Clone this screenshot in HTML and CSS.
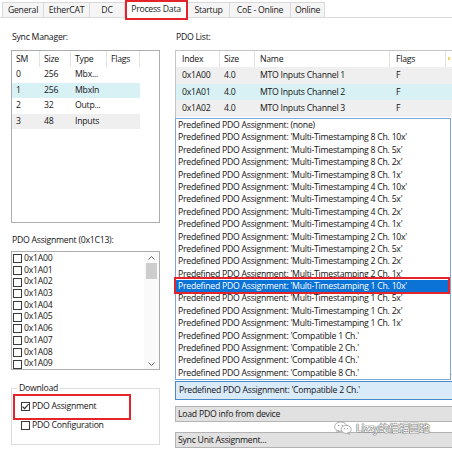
FILE: index.html
```html
<!DOCTYPE html>
<html>
<head>
<meta charset="utf-8">
<link rel="stylesheet" href="styles.css">
</head>
<body>
<div class="window">
  <div class="tabs">
    <div class="tab t-general">General</div>
    <div class="tab t-ethercat">EtherCAT</div>
    <div class="tab t-dc">DC</div>
    <div class="tab t-pd active">Process Data</div>
    <div class="tab t-startup">Startup</div>
    <div class="tab t-coe">CoE - Online</div>
    <div class="tab t-online">Online</div>
  </div>

  <div class="content">
    <div class="left">
      <div class="label">Sync Manager:</div>
      <div class="box sm-box">
        <div class="lv-head">
          <div class="hc sm-c1">SM</div>
          <div class="hc sm-c2">Size</div>
          <div class="hc sm-c3">Type</div>
          <div class="hc sm-c4">Flags</div>
        </div>
        <div class="sm-row"><div class="sm-c1">0</div><div class="sm-c2">256</div><div class="sm-c3">Mbx...</div><div class="sm-c4"></div></div>
        <div class="sm-row hl-cyan"><div class="sm-c1">1</div><div class="sm-c2">256</div><div class="sm-c3">MbxIn</div><div class="sm-c4"></div></div>
        <div class="sm-row"><div class="sm-c1">2</div><div class="sm-c2">32</div><div class="sm-c3">Outp...</div><div class="sm-c4"></div></div>
        <div class="sm-row hl-gray"><div class="sm-c1">3</div><div class="sm-c2">48</div><div class="sm-c3">Inputs</div><div class="sm-c4"></div></div>
      </div>

      <div class="label label-pa">PDO Assignment (0x1C13):</div>
      <div class="box pa-box">
        <div class="pa-list">
          <div class="pa-item"><span class="chk"></span>0x1A00</div>
          <div class="pa-item"><span class="chk"></span>0x1A01</div>
          <div class="pa-item"><span class="chk"></span>0x1A02</div>
          <div class="pa-item"><span class="chk"></span>0x1A03</div>
          <div class="pa-item"><span class="chk"></span>0x1A04</div>
          <div class="pa-item"><span class="chk"></span>0x1A05</div>
          <div class="pa-item"><span class="chk"></span>0x1A06</div>
          <div class="pa-item"><span class="chk"></span>0x1A07</div>
          <div class="pa-item"><span class="chk"></span>0x1A08</div>
          <div class="pa-item"><span class="chk"></span>0x1A09</div>
        </div>
        <div class="vscroll">
          <svg class="arrow" width="9" height="6" viewBox="0 0 9 6"><path d="M1.5 4.5 L4.5 1.5 L7.5 4.5" fill="none" stroke="#606060" stroke-width="1"/></svg>
          <div class="track"><div class="thumb"></div></div>
          <svg class="arrow" width="9" height="6" viewBox="0 0 9 6"><path d="M1.5 1.5 L4.5 4.5 L7.5 1.5" fill="none" stroke="#606060" stroke-width="1"/></svg>
        </div>
      </div>

      <div class="group">
        <div class="legend">Download</div>
        <div class="grp-item marked"><span class="chk checked"><svg width="9" height="9" viewBox="0 0 9 9"><path d="M1.6 4.6 L3.6 6.6 L7.6 2" fill="none" stroke="#222" stroke-width="1.1"/></svg></span>PDO Assignment</div>
        <div class="grp-item"><span class="chk"></span>PDO Configuration</div>
      </div>
    </div>

    <div class="right">
      <div class="label">PDO List:</div>
      <div class="box pdo-box">
        <div class="lv-head">
          <div class="hc p-c1">Index</div>
          <div class="hc p-c2">Size</div>
          <div class="hc p-c3">Name</div>
          <div class="hc p-c4">Flags</div>
          <div class="hc p-c5"><span class="mark"></span></div>
        </div>
        <div class="p-row hl-gray"><div class="p-c1">0x1A00</div><div class="p-c2">4.0</div><div class="p-c3">MTO Inputs Channel 1</div><div class="p-c4">F</div></div>
        <div class="p-row hl-cyan"><div class="p-c1">0x1A01</div><div class="p-c2">4.0</div><div class="p-c3">MTO Inputs Channel 2</div><div class="p-c4">F</div></div>
        <div class="p-row hl-gray"><div class="p-c1">0x1A02</div><div class="p-c2">4.0</div><div class="p-c3">MTO Inputs Channel 3</div><div class="p-c4">F</div></div>
        <div class="p-row"></div>
      </div>
      <div class="combo">Predefined PDO Assignment: 'Compatible 2 Ch.'</div>
      <div class="btn">Load PDO info from device</div>
      <div class="btn btn2">Sync Unit Assignment...</div>
    </div>
  </div>

  <div class="dropdown">
    <div class="dd-item">Predefined PDO Assignment: (none)</div>
    <div class="dd-item">Predefined PDO Assignment: 'Multi-Timestamping 8 Ch. 10x'</div>
    <div class="dd-item">Predefined PDO Assignment: 'Multi-Timestamping 8 Ch. 5x'</div>
    <div class="dd-item">Predefined PDO Assignment: 'Multi-Timestamping 8 Ch. 2x'</div>
    <div class="dd-item">Predefined PDO Assignment: 'Multi-Timestamping 8 Ch. 1x'</div>
    <div class="dd-item">Predefined PDO Assignment: 'Multi-Timestamping 4 Ch. 10x'</div>
    <div class="dd-item">Predefined PDO Assignment: 'Multi-Timestamping 4 Ch. 5x'</div>
    <div class="dd-item">Predefined PDO Assignment: 'Multi-Timestamping 4 Ch. 2x'</div>
    <div class="dd-item">Predefined PDO Assignment: 'Multi-Timestamping 4 Ch. 1x'</div>
    <div class="dd-item">Predefined PDO Assignment: 'Multi-Timestamping 2 Ch. 10x'</div>
    <div class="dd-item">Predefined PDO Assignment: 'Multi-Timestamping 2 Ch. 5x'</div>
    <div class="dd-item">Predefined PDO Assignment: 'Multi-Timestamping 2 Ch. 2x'</div>
    <div class="dd-item">Predefined PDO Assignment: 'Multi-Timestamping 2 Ch. 1x'</div>
    <div class="dd-item selected">Predefined PDO Assignment: 'Multi-Timestamping 1 Ch. 10x'</div>
    <div class="dd-item">Predefined PDO Assignment: 'Multi-Timestamping 1 Ch. 5x'</div>
    <div class="dd-item">Predefined PDO Assignment: 'Multi-Timestamping 1 Ch. 2x'</div>
    <div class="dd-item">Predefined PDO Assignment: 'Multi-Timestamping 1 Ch. 1x'</div>
    <div class="dd-item">Predefined PDO Assignment: 'Compatible 1 Ch.'</div>
    <div class="dd-item">Predefined PDO Assignment: 'Compatible 2 Ch.'</div>
    <div class="dd-item">Predefined PDO Assignment: 'Compatible 4 Ch.'</div>
    <div class="dd-item">Predefined PDO Assignment: 'Compatible 8 Ch.'</div>
  </div>

  <div class="watermark">
    <svg width="18" height="14" viewBox="0 0 20 15">
      <ellipse cx="7.5" cy="6" rx="6.8" ry="5.3" fill="#fff" stroke="#9a9a9a" stroke-width="0.9"/>
      <path d="M3.5 10 L2.8 12.6 L6 10.9 Z" fill="#fff" stroke="#9a9a9a" stroke-width="0.8"/>
      <ellipse cx="13.5" cy="9" rx="5.6" ry="4.5" fill="#fff" stroke="#9a9a9a" stroke-width="0.9"/>
      <path d="M16.5 12.5 L17.4 14.6 L14.8 13.3 Z" fill="#fff" stroke="#9a9a9a" stroke-width="0.8"/>
      <circle cx="5.2" cy="4.6" r="0.8" fill="#9a9a9a"/>
      <circle cx="9.2" cy="4.6" r="0.8" fill="#9a9a9a"/>
      <circle cx="11.6" cy="8.2" r="0.7" fill="#9a9a9a"/>
      <circle cx="15.2" cy="8.2" r="0.7" fill="#9a9a9a"/>
    </svg>
    <span class="wm-text">Lizzy的倍福园地</span>
  </div>
</div>
</body>
</html>
```

FILE: styles.css
```css
* { box-sizing: border-box; margin: 0; padding: 0; }
html, body { width: 452px; height: 449px; overflow: hidden; background: #fff; }
body {
  font-family: "Open Sans", "Noto Sans", "Noto Sans CJK SC", sans-serif;
  font-size: 8.7px;
  letter-spacing: -0.25px;
  color: #151515;
}
.window { position: relative; width: 452px; height: 449px; overflow: hidden; background: #fff; }

/* tabs */
.tabs {
  display: flex;
  align-items: flex-end;
  height: 18px;
  padding-left: 2px;
  border-bottom: 1px solid #d9d9d9;
}
.tab {
  height: 15px;
  line-height: 14px;
  text-align: center;
  background: #f5f5f5;
  border: 1px solid #d9d9d9;
  border-left: none;
  border-bottom: none;
  white-space: nowrap;
  color: #1a1a1a;
}
.t-general { width: 42px; border-left: 1px solid #d9d9d9; }
.t-ethercat { width: 46px; }
.t-dc { width: 35px; }
.t-pd { width: 63px; }
.t-startup { width: 42px; }
.t-coe { width: 61px; }
.t-online { width: 34px; }
.tab.active {
  position: relative;
  height: 19px;
  margin-bottom: -1px;
  line-height: 18px;
  background: #fff;
  border-left: none;
}
.tab.active::after {
  content: "";
  position: absolute;
  left: 0; top: 0; right: -1px; bottom: -2px;
  border: 2px solid #e3242b;
}

/* content */
.content { display: flex; }
.left { width: 175px; padding-left: 11px; flex: none; }
.right { width: 280px; flex: none; }
.label { height: 12px; line-height: 12px; margin-top: 13px; padding-left: 1px; white-space: nowrap; }
.box { border: 1px solid #adadad; background: #fff; overflow: hidden; }

/* list view header */
.lv-head { display: flex; height: 16px; }
.hc { height: 16px; line-height: 16px; border-right: 1px solid #e3e3e3; white-space: nowrap; }

/* sync manager */
.sm-box { width: 149px; height: 173px; margin-top: 7px; }
.sm-c1 { width: 28px; padding-left: 4px; }
.sm-c2 { width: 31px; padding-left: 4px; }
.sm-c3 { width: 36px; padding-left: 4px; }
.sm-c4 { width: 33px; padding-left: 4px; }
.sm-row { display: flex; height: 15.5px; line-height: 15.5px; width: 128px; white-space: nowrap; }
.hl-cyan { background: #d8f1f5; }
.hl-gray { background: #efefef; }

/* pdo assignment */
.label-pa { margin-top: 11px; }
.pa-box { width: 149px; height: 119px; margin-top: 5px; display: flex; }
.pa-list { flex: 1; padding-top: 1px; padding-left: 1px; }
.pa-item { display: flex; align-items: center; height: 11.7px; line-height: 11.7px; white-space: nowrap; }
.chk {
  display: inline-flex;
  align-items: center;
  justify-content: center;
  width: 9px; height: 9px;
  border: 1px solid #3a3a3a;
  background: #fff;
  margin-right: 2px;
  flex: none;
}
.chk svg { display: block; margin: -1px; }
.vscroll { width: 15px; display: flex; flex-direction: column; align-items: center; background: #fafafa; padding: 3px 0 2px; }
.vscroll .arrow { display: block; flex: none; }
.track { flex: 1; width: 100%; padding: 2px 2px 0; }
.thumb { height: 16px; background: #cdcdcd; }

/* group box */
.group {
  position: relative;
  width: 149px;
  height: 57px;
  margin-top: 18px;
  border: 1px solid #dcdcdc;
  padding: 11px 0 0 9px;
}
.legend {
  position: absolute;
  left: 5px; top: -7px;
  padding: 0 2px;
  background: #fff;
  line-height: 12px;
}
.grp-item { display: flex; align-items: center; height: 12px; line-height: 12px; white-space: nowrap; }
.grp-item + .grp-item { margin-top: 7px; }
.grp-item.marked { position: relative; }
.grp-item.marked::after {
  content: "";
  position: absolute;
  left: -8px; top: -6px;
  width: 114px; height: 22px;
  border: 2px solid #e3242b;
}

/* pdo list */
.pdo-box { width: 280px; height: 325px; margin-top: 7px; border-right: none; border-color: #c4c4c4; }
.p-c1 { width: 44px; padding-left: 6px; flex: none; }
.p-c2 { width: 35px; padding-left: 4px; flex: none; }
.p-c3 { width: 135px; padding-left: 5px; flex: none; }
.p-c4 { width: 56px; padding-left: 6px; flex: none; }
.p-c5 { width: 20px; flex: none; position: relative; }
.mark { position: absolute; left: 2px; top: 6px; width: 2px; height: 3px; background: #f3d36a; }
.p-row { display: flex; height: 16.5px; line-height: 16.5px; white-space: nowrap; }

.combo {
  width: 280px; height: 19px;
  margin-top: 6px;
  line-height: 17px;
  padding-left: 3px;
  background: #d9eaf9;
  border: 1px solid #4a8ac4;
  border-right: none;
  white-space: nowrap;
}
.btn {
  width: 280px; height: 16px;
  margin-top: 6px;
  line-height: 14px;
  padding-left: 2px;
  background: #e1e1e1;
  border: 1px solid #b4b4b4;
  border-right: none;
  white-space: nowrap;
}
.btn2 { margin-top: 10px; }

/* dropdown popup */
.dropdown {
  position: absolute;
  left: 175px; top: 118px;
  width: 276px; height: 262px;
  background: #fff;
  border: 1px solid #7fa7d8;
}
.dd-item { height: 12.4px; line-height: 12.4px; padding-left: 2px; white-space: nowrap; color: #111; }
.dd-item.selected {
  position: relative;
  background: #0b72d6;
  color: #fff;
}
.dd-item.selected::after {
  content: "";
  position: absolute;
  left: -2px; top: -3px; right: 0; bottom: -2px;
  border: 2px solid #e3242b;
}

/* watermark */
.watermark {
  position: absolute;
  left: 334px; top: 421px;
  display: flex; align-items: center; gap: 4px;
}
.wm-text {
  font-family: "Noto Sans CJK SC", "Noto Sans", sans-serif;
  font-size: 10.5px;
  line-height: 14px;
  color: #fff;
  text-shadow: 0 0 1px #555, 0 0 1px #555, 0 0 1px #555;
  letter-spacing: -0.3px;
}
```
